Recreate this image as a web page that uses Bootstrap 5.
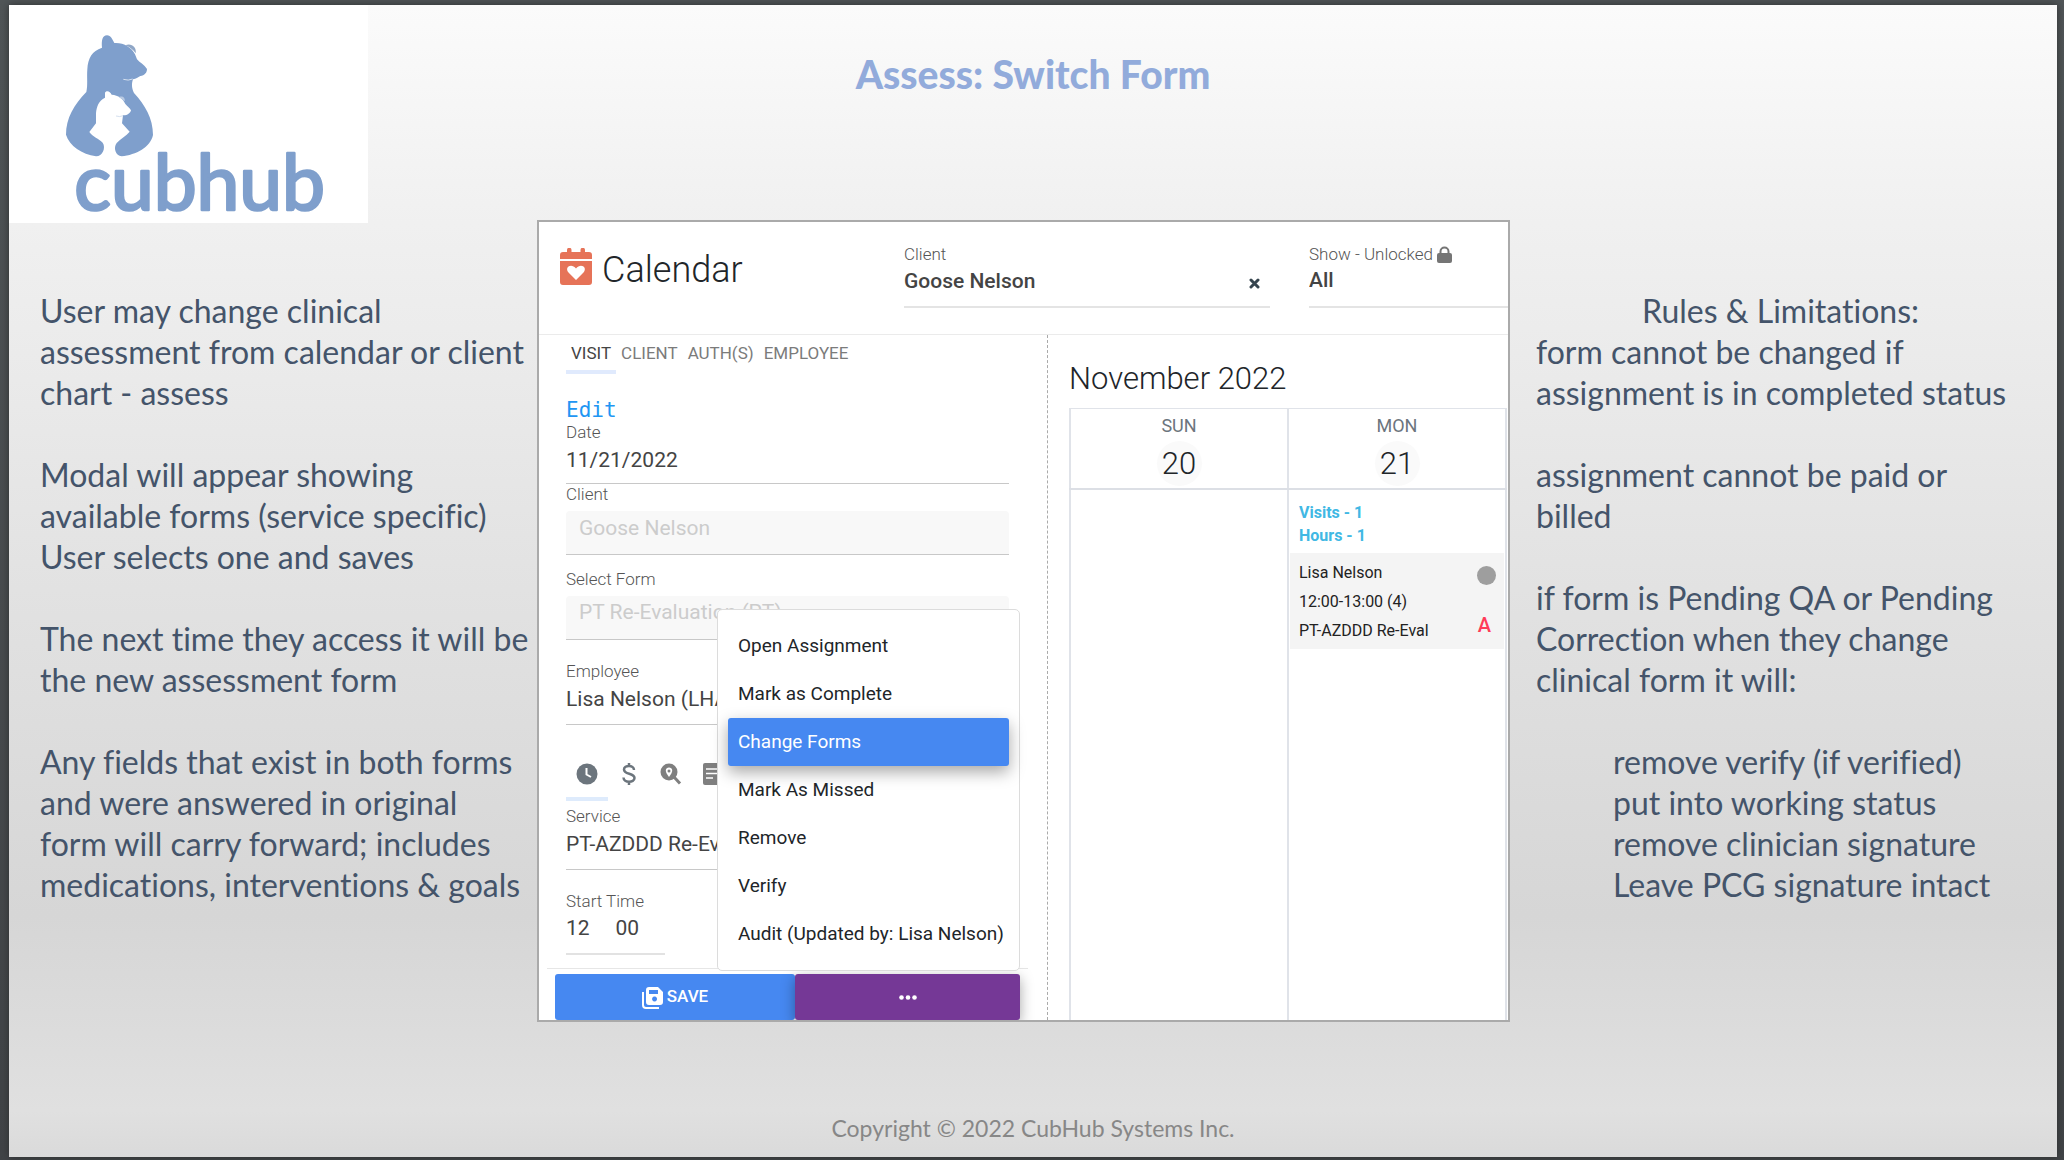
<!DOCTYPE html>
<html lang="en">
<head>
<meta charset="utf-8">
<meta name="viewport" content="width=device-width, initial-scale=1">
<title>Assess: Switch Form</title>
<link href="https://cdn.jsdelivr.net/npm/bootstrap@5.3.0/dist/css/bootstrap.min.css" rel="stylesheet">
<style>
body { background: linear-gradient(#515658, #414447); min-height: 100vh; padding: 5px 7px 3px 9px; font-family: Lato, "Open Sans", sans-serif; }
.slide { background: linear-gradient(#fbfbfb 0%, #f0f0f0 19%, #e4e4e4 46%, #d6d6d6 79%, #e0e0e0 96%, #dadada 100%); box-shadow: 0 0 8px #2d2f30; font-variant-ligatures: none; }
.slide-top { display: grid; grid-template-columns: 1fr auto 1fr; margin-bottom: -3px; }
.logo { width: 359px; height: 218px; display: block; background: #fff; overflow: visible; }
.logo-name { font: 400 230px Lato, sans-serif; fill: #7f9fcc; stroke: #7f9fcc; stroke-width: 8; stroke-linejoin: round; }
.slide-title { color: #92abdb; font-size: 39px; font-weight: 900; line-height: 48px; padding-top: 45px; }
.slide-body { display: grid; grid-template-columns: 528fr 973fr 547fr; }
.notes { color: #44546a; font-size: 32px; line-height: 41px; padding-top: 70px; white-space: nowrap; }
.notes p { margin-bottom: 41px; }
.notes-left { padding-left: 31px; }
.notes-right { padding-left: 26px; }
.notes-right h2 { font-size: inherit; font-weight: inherit; line-height: inherit; padding-right: 32px; }
.notes-right ul { padding-left: 77px; }
.slide-foot { color: #878787; font-size: 23px; line-height: 32px; padding-bottom: 13px; }

.app { background: #fff; border: 2px solid #aaa; height: 802px; overflow: hidden; font-family: Roboto, sans-serif; font-size: 20px; color: #212529; }
.app-head { height: 113px; border-bottom: 1px solid #ebebeb; padding: 22px 0 0 21px; flex: none; }
.app-head h2 { font-size: 36px; font-weight: 300; line-height: 44px; margin: 4px 0 0 10px; }
.brand { width: 344px; }
.client-pick { width: 366px; margin-right: 39px; }
.app label { display: block; font-size: 17px; font-weight: 300; line-height: 20px; color: #555; }
.line-input { display: block; width: 100%; height: 44px; border: 0; border-bottom: 1px solid #c8c8c8; border-radius: 0; background: transparent; padding: 0 0 8px; font-size: 21px; color: #444; outline: 0; appearance: none; }
.date-input { height: 42px; padding-bottom: 6px; }
.app-head .line-input { font-weight: 500; border-bottom: 2px solid #e4e4e4; }
.fill-input { background: #f8f8f8; color: #ccc; padding: 0 13px 9px; border-radius: 4px 4px 0 0; margin-top: 7px; opacity: 1; }
.clear { background: none; border: 0; padding: 0; position: absolute; right: 10px; top: 34px; line-height: 0; }

.visit { width: 509px; flex: none; border-right: 1px dashed #aaa; padding: 1px 19px 0 8px; }
.visit-form { padding: 0 19px; }
.tabs { height: 38px; font-size: 17px; }
.tabs a, .icon-tabs a { color: #7b7b7b; text-decoration: none; border-bottom: 4px solid transparent; padding: 0 5px; line-height: 35px; }
.tabs a.on { color: #444; border-color: #e0eafd; }
.edit { color: #2196f3; text-decoration: none; font: 21px/24px "DejaVu Sans Mono", monospace; display: block; margin-top: 24px; width: 50px; }
.gap-a { margin-top: 14px; }
.gap-b { margin-top: 21px; }
.icon-tabs { height: 41px; margin: 35px 0 5px; }
.icon-tabs a { display: flex; width: 42px; padding: 0 0 10px; align-items: center; justify-content: center; }
.icon-tabs a.on { border-color: #deebfc; }
.start-time { width: 99px; }
.start-time .line-input { border: 0; height: 42px; }
.start-time .time { border-bottom: 2px solid #e2e2e2; }
.form-foot { border-top: 1px solid #e6e6e6; padding: 5px 8px 0; margin-top: 13px; position: relative; }
.form-foot .btn { height: 46px; border: 0; border-radius: 3px; color: #fff; font-size: 17px; font-weight: 500; padding: 0; }
.save { background: #4688f1; width: 240px; }
.more { background: #753896; box-shadow: 0 4px 14px rgba(0,0,0,.35); flex: 1; }
.app .dropdown-menu { right: 8px; bottom: 49px; width: 303px; padding: 12px 10px; border: 1px solid #dcdcdc; border-radius: 5px; font-size: 19px; z-index: 5; }
.app .dropdown-item { height: 48px; padding: 0 10px; border-radius: 3px; color: #212529; }
.app .dropdown-item.active { background: #4688f1; color: #fff; box-shadow: 0 6px 16px rgba(0,0,0,.35); }

.month { padding: 0 1px 0 21px; display: flex; flex-direction: column; flex: 1; }
.month h3 { font-size: 31px; font-weight: 300; line-height: 36px; margin: 26px 0 11px; }
.month table { width: 100%; table-layout: fixed; flex: 1; display: flex; flex-direction: column; margin: 0; }
.month tr { display: flex; height: 100%; }
.month tbody { flex: 1; }
.month th, .month td { flex: 1; border-left: 2px solid #e0e3e9; }
.month th:last-child, .month td:last-child { border-right: 2px solid #e0e3e9; }
.month thead { border-top: 1px solid #e0e3e9; border-bottom: 2px solid #dcdfe5; height: 82px; }
.month th { font-weight: 400; font-size: 18px; line-height: 22px; color: #6c757d; text-align: center; padding-top: 6px; }
.day { display: block; width: 45px; height: 45px; line-height: 45px; margin: 4px auto 0; border-radius: 50%; background: #fafafa; font-size: 31px; font-weight: 300; color: #212529; }
.totals { color: #41b8e4; font-size: 16px; font-weight: 700; line-height: 23px; padding: 10px 9px 6px; }
.event { background: #f4f4f4; padding: 5px 8px 3px 9px; height: 96px; font-size: 16px; line-height: 29px; color: #222; }
.dot { width: 19px; height: 19px; border-radius: 50%; background: #9e9e9e; margin-top: 8px; }
.flag { color: #ff3b58; font-size: 20px; font-weight: 500; line-height: 24px; padding: 0 5px 9px 0; }
</style>
</head>
<body class="d-flex">
<div class="slide d-flex flex-column flex-fill">
  <header class="slide-top">
    <svg class="logo" viewBox="27 15 1077 654" role="img" aria-label="cubhub">
      <g fill="#7f9fcc">
        <path d="M376 136C392 128 411 140 407 160C400 150 390 141 376 136Z" fill="#8fa6c6"/>
        <path d="M306 143C304 122 307 106 321 106C333 107 337 118 343 129C370 127 395 142 405 163L411 178C418 187 433 194 441 207C441 218 434 226 421 228C414 232 408 236 399 238C395 250 394 263 402 279C435 315 459 355 459 405C452 441 408 465 365 469C347 468 339 443 350 429C360 418 379 407 389 395L366 370L369 346C381 347 391 340 393 331C389 323 381 319 376 312C370 296 355 286 335 284C330 273 320 270 315 278L315 293C296 302 290 319 288 340L288 370L268 396C279 411 296 416 308 428C319 444 306 470 288 469C246 462 208 438 198 404C198 355 222 314 259 276C264 256 260 233 262 208C264 174 276 153 306 143Z"/>
        <path d="M357 291C367 287 376 292 374 304Z" fill="#b9cae2"/>
      </g>
      <path d="M370 238Q385 243 398 237M348 348Q360 352 369 347" fill="none" stroke="#d5e0ef" stroke-width="3"/>
      <text class="logo-name" x="223" y="631">cubhub</text>
    </svg>
    <h1 class="slide-title m-0">Assess: Switch Form</h1>
  </header>

  <main class="slide-body">
    <section class="notes notes-left">
      <p>User may change clinical<br>assessment from calendar or client<br>chart - assess</p>
      <p>Modal will appear showing<br>available forms (service specific)<br>User selects one and saves</p>
      <p>The next time they access it will be<br>the new assessment form</p>
      <p>Any fields that exist in both forms<br>and were answered in original<br>form will carry forward; includes<br>medications, interventions &amp; goals</p>
    </section>

    <section class="app d-flex flex-column">
      <div class="app-head d-flex">
        <div class="brand d-flex align-items-start">
          <svg width="32" height="37" viewBox="0 0 32 37" class="mt-1" aria-hidden="true">
            <path fill="#e67358" d="M7 4V2a2 2 0 0 1 4.500 0V4H20.500V2a2 2 0 0 1 4.500 0V4H29a3 3 0 0 1 3 3V11H0V7A3 3 0 0 1 3 4ZM0 13H32V34a3 3 0 0 1-3 3H3a3 3 0 0 1-3-3Z"/>
            <path fill="#fff" d="M16 32L8.500 24.500C4 19 11.500 14.500 16 20.500C20.500 14.500 28 19 23.500 24.500Z"/>
          </svg>
          <h2>Calendar</h2>
        </div>
        <div class="client-pick position-relative">
          <label for="pick">Client</label>
          <input id="pick" class="line-input" value="Goose Nelson">
          <button class="clear" type="button" aria-label="Clear client"><svg width="11" height="11" viewBox="0 0 11 11"><path d="M2 2L9 9M9 2L2 9" stroke="#36454f" stroke-width="3" stroke-linecap="round"/></svg></button>
        </div>
        <div class="flex-fill">
          <label for="show">Show - Unlocked<svg width="15" height="18" viewBox="0 0 15 18" class="align-text-bottom ms-1" aria-hidden="true"><rect y="7" width="15" height="10" rx="2" fill="#757575"/><path d="M3.500 8V5.500a4 4 0 0 1 8 0V8" fill="none" stroke="#757575" stroke-width="2"/></svg></label>
          <select id="show" class="line-input"><option>All</option></select>
        </div>
      </div>

      <div class="d-flex flex-fill">
        <form class="visit">
          <div class="visit-form">
            <nav class="tabs d-flex"><a class="on" href="#">VISIT</a><a href="#">CLIENT</a><a href="#">AUTH(S)</a><a href="#">EMPLOYEE</a></nav>
            <a class="edit" href="#">Edit</a>
            <label for="date">Date</label>
            <input id="date" class="line-input date-input" value="11/21/2022">
            <label for="client">Client</label>
            <input id="client" class="line-input fill-input" value="Goose Nelson" disabled>
            <label class="gap-a" for="form">Select Form</label>
            <select id="form" class="line-input fill-input" disabled><option>PT Re-Evaluation (PT)</option></select>
            <label class="gap-b" for="emp">Employee</label>
            <input id="emp" class="line-input" value="Lisa Nelson (LHA)">
            <nav class="icon-tabs d-flex">
              <a class="on" href="#" aria-label="Time"><svg width="22" height="22" viewBox="0 0 22 22"><circle cx="11" cy="11" r="10.500" fill="#6c757d"/><path d="M10.500 5V11.500L15 14" fill="none" stroke="#fff" stroke-width="2"/></svg></a>
              <a href="#" aria-label="Billing"><svg width="14" height="22" viewBox="0 0 14 22"><path d="M12 7C12 1.500 2 2 2 6.500C2 12 12.500 9.500 12.500 15C12.500 20 1.500 20 1.500 14.500M7 0V4M7 18V22" fill="none" stroke="#6c757d" stroke-width="2.500"/></svg></a>
              <a href="#" aria-label="Location"><svg width="22" height="22" viewBox="0 0 22 22"><circle cx="9" cy="9" r="8.500" fill="#7f7f7f"/><path d="M14 14L20 20.500" stroke="#7f7f7f" stroke-width="3"/><path d="M9 14C4 8 5.500 4.500 9 4.500S14 8 9 14Z" fill="#fff"/><circle cx="9" cy="8" r="1.500" fill="#7f7f7f"/></svg></a>
              <a href="#" aria-label="Notes"><svg width="20" height="22" viewBox="0 0 20 22"><rect width="20" height="22" rx="2" fill="#7f7f7f"/><path d="M3 6H17M3 10.500H17M3 15H10" stroke="#fff" stroke-width="1.500"/></svg></a>
            </nav>
            <label for="service">Service</label>
            <input id="service" class="line-input" value="PT-AZDDD Re-Eval">
            <div class="start-time gap-b">
              <label for="hour">Start Time</label>
              <div class="time d-flex"><input id="hour" class="line-input" value="12"><input class="line-input" aria-label="Start minute" value="00"></div>
            </div>
          </div>
          <div class="form-foot d-flex">
            <button class="btn save" type="button"><svg width="21" height="22" viewBox="0 0 21 22" class="me-1" aria-hidden="true"><path d="M1 5V18a3 3 0 0 0 3 3H17" fill="none" stroke="#fff" stroke-width="2"/><path fill="#fff" fill-rule="evenodd" d="M7 0H16L21 5V15a3 3 0 0 1-3 3H7a3 3 0 0 1-3-3V3a3 3 0 0 1 3-3ZM7 3V7H16V3ZM12.500 9.500a2.500 2.500 0 1 0 .1 0Z"/></svg>SAVE</button>
            <button class="btn more" type="button" aria-label="More actions"><svg width="18" height="5" viewBox="0 0 18 5"><g fill="#fff"><circle cx="2.500" cy="2.500" r="2.300"/><circle cx="9" cy="2.500" r="2.300"/><circle cx="15.500" cy="2.500" r="2.300"/></g></svg></button>
            <div class="dropdown-menu show">
              <button class="dropdown-item" type="button">Open Assignment</button>
              <button class="dropdown-item" type="button">Mark as Complete</button>
              <button class="dropdown-item active" type="button">Change Forms</button>
              <button class="dropdown-item" type="button">Mark As Missed</button>
              <button class="dropdown-item" type="button">Remove</button>
              <button class="dropdown-item" type="button">Verify</button>
              <button class="dropdown-item" type="button">Audit (Updated by: Lisa Nelson)</button>
            </div>
          </div>
        </form>

        <section class="month">
          <h3>November 2022</h3>
          <table>
            <thead><tr><th>SUN<span class="day">20</span></th><th>MON<span class="day">21</span></th></tr></thead>
            <tbody><tr>
              <td></td>
              <td>
                <div class="totals">Visits - 1<br>Hours - 1</div>
                <div class="event d-flex justify-content-between">
                  <div>Lisa Nelson<br>12:00-13:00 (4)<br>PT-AZDDD Re-Eval</div>
                  <div class="d-flex flex-column justify-content-between align-items-end"><span class="dot"></span><span class="flag">A</span></div>
                </div>
              </td>
            </tr></tbody>
          </table>
        </section>
      </div>
    </section>

    <section class="notes notes-right">
      <h2 class="text-center m-0">Rules &amp; Limitations:</h2>
      <p>form cannot be changed if<br>assignment is in completed status</p>
      <p>assignment cannot be paid or<br>billed</p>
      <p>if form is Pending QA or Pending<br>Correction when they change<br>clinical form it will:</p>
      <ul class="list-unstyled m-0">
        <li>remove verify (if verified)</li>
        <li>put into working status</li>
        <li>remove clinician signature</li>
        <li>Leave PCG signature intact</li>
      </ul>
    </section>
  </main>

  <footer class="slide-foot text-center mt-auto">Copyright © 2022 CubHub Systems Inc.</footer>
</div>
<script src="https://cdn.jsdelivr.net/npm/bootstrap@5.3.0/dist/js/bootstrap.bundle.min.js"></script>
</body>
</html>
